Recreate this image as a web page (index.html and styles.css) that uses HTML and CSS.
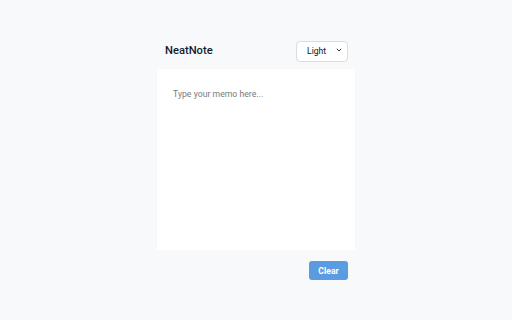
FILE: index.html
```html
<!DOCTYPE html>
<html>
<head>
<meta charset="utf-8">
<link rel="stylesheet" href="styles.css">
</head>
<body>
<div class="page">
  <div class="app">
    <header class="header">
      <h1 class="title">NeatNote</h1>
      <span class="select-wrap">
        <select class="theme">
          <option>Light</option>
          <option>Dark</option>
        </select>
        <svg class="chevron" width="6" height="4" viewBox="0 0 6 4"><path d="M0.8 0.8 L3 3 L5.2 0.8" fill="none" stroke="#333" stroke-width="1"/></svg>
      </span>
    </header>
    <textarea class="memo" placeholder="Type your memo here..."></textarea>
    <footer class="footer">
      <button class="clear">Clear</button>
    </footer>
  </div>
</div>
</body>
</html>
```
FILE: styles.css
```css
html, body {
  margin: 0;
  padding: 0;
  background: #f8f9fb;
  font-family: Roboto, "Liberation Sans", sans-serif;
}
.page {
  width: 512px;
  height: 320px;
  display: flex;
  align-items: center;
  justify-content: center;
}
.app {
  width: 198px;
  display: flex;
  flex-direction: column;
}
.header {
  display: flex;
  align-items: center;
  justify-content: space-between;
  padding: 9px 7px 9px 8px;
}
.title {
  margin: 0;
  font-size: 11.2px;
  font-weight: 500;
  color: #141b2d;
  padding-top: 2px;
}
.select-wrap {
  position: relative;
  display: block;
  width: 52px;
  height: 21px;
}
.theme {
  -webkit-appearance: none;
  appearance: none;
  box-sizing: border-box;
  width: 52px;
  height: 21px;
  font-family: Roboto, "Liberation Sans", sans-serif;
  font-size: 8.6px;
  color: #111;
  background: #fff;
  border: 1px solid #d9dce1;
  border-radius: 4px;
  padding: 0 0 0 10px;
  margin: 0;
  outline: none;
}
.chevron {
  position: absolute;
  right: 6px;
  top: 9px;
  pointer-events: none;
}
.memo {
  display: block;
  box-sizing: border-box;
  width: 198px;
  height: 181px;
  border: none;
  outline: none;
  resize: none;
  background: #fff;
  padding: 19px 16px 16px 16px;
  font-family: Roboto, "Liberation Sans", sans-serif;
  font-size: 8.7px;
  line-height: 12px;
  color: #111;
}
.memo::placeholder {
  color: #7a7a7a;
}
.footer {
  display: flex;
  justify-content: flex-end;
  padding: 11px 7px 10px 8px;
}
.clear {
  width: 39px;
  height: 19px;
  border: none;
  border-radius: 3px;
  background: #5b9be0;
  color: #fff;
  font-family: Roboto, "Liberation Sans", sans-serif;
  font-size: 8.6px;
  font-weight: 700;
  padding: 0;
}
```
